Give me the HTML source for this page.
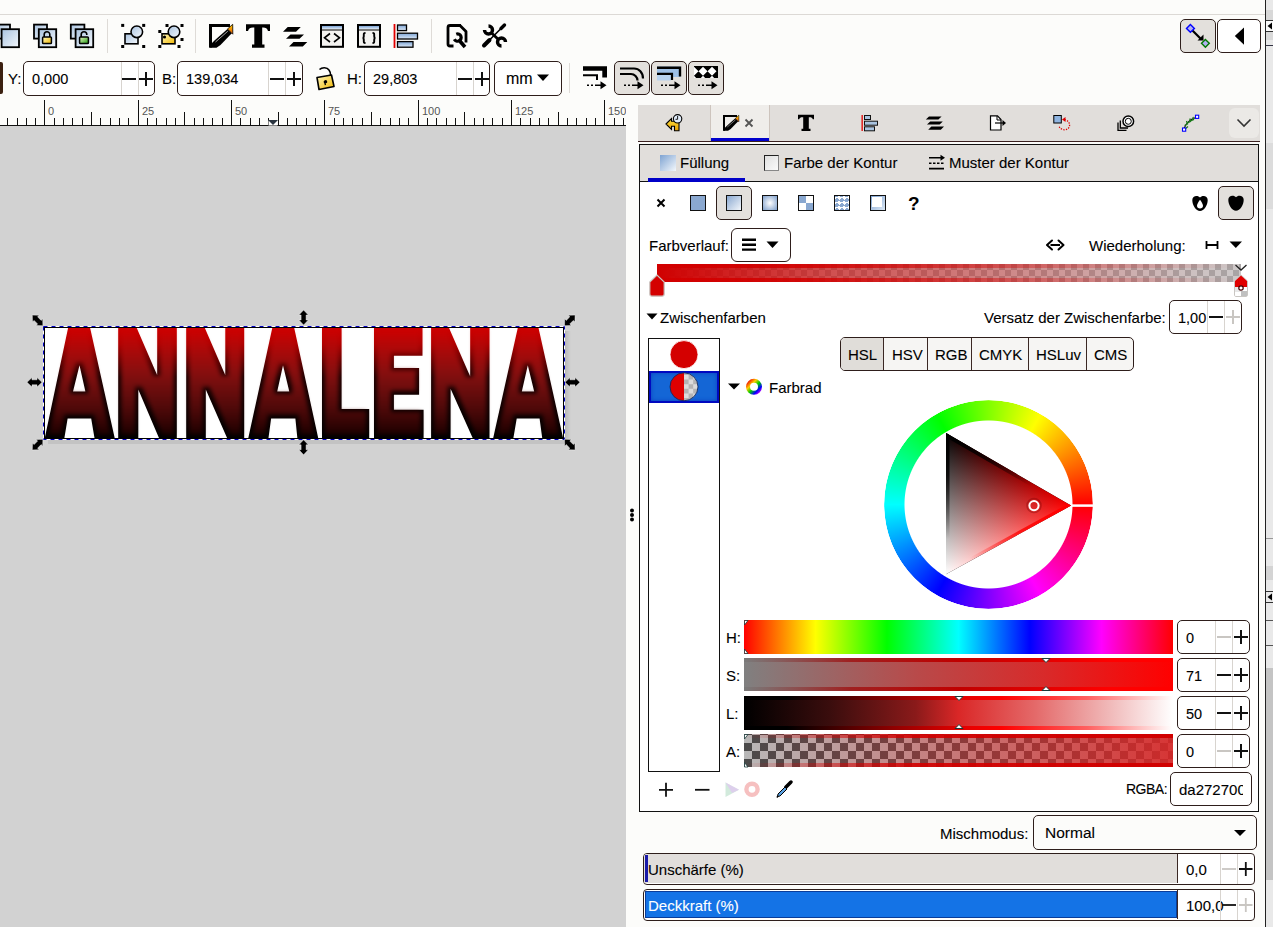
<!DOCTYPE html>
<html><head><meta charset="utf-8">
<style>
*{box-sizing:border-box;margin:0;padding:0}
html,body{width:1273px;height:927px;overflow:hidden;background:#fcfcfa;font-family:"Liberation Sans",sans-serif;color:#000;position:relative;-webkit-text-stroke:0.1px currentColor}
.a{position:absolute}
.sep{position:absolute;width:1px;background:#dedbd7}
.spin{position:absolute;height:35px;border:1px solid #2e1e1b;border-radius:5px;background:#fff}
.spin .v{position:absolute;left:8px;top:8.5px;font-size:14.5px}
.spin .d{position:absolute;top:0;bottom:0;width:1px;background:#d8d4cf}
.lbl{position:absolute;font-size:15px}
.btn{position:absolute;border:1px solid #2e1e1b;border-radius:5px;background:#e3e0dc}
.t15{font-size:15px}
.mi,.pl{position:absolute;width:14px;height:14px;top:50%;margin-top:-7px}
.mi:before,.pl:before,.pl:after{content:"";position:absolute;background:#111}
.mi:before,.pl:before{left:0;right:0;top:6px;height:2px}
.pl:after{top:0;bottom:0;left:6px;width:2px}
.gy:before,.gy:after{background:#c9c6c2}

</style></head><body>
<!-- top strip -->
<div class="a" style="left:0;top:14px;width:1265px;height:1px;background:#dcd9d5"></div>


<!-- toolbar icons -->
<svg class="a" style="left:0;top:0" width="1273" height="145" viewBox="0 0 1273 145">
 <defs>
  <linearGradient id="bl" x1="0" y1="0" x2="1" y2="1"><stop offset="0" stop-color="#a9c3e0"/><stop offset="1" stop-color="#f4f8fc"/></linearGradient>
  <linearGradient id="bl2" x1="0" y1="0" x2="0" y2="1"><stop offset="0" stop-color="#7fa6d6"/><stop offset="1" stop-color="#dce8f5"/></linearGradient>
  <linearGradient id="yl" x1="0" y1="0" x2="1" y2="1"><stop offset="0" stop-color="#fff9c0"/><stop offset="1" stop-color="#f2b800"/></linearGradient>
  <linearGradient id="gr" x1="0" y1="0" x2="1" y2="1"><stop offset="0" stop-color="#e8f8c0"/><stop offset="1" stop-color="#1e9a10"/></linearGradient>
  <linearGradient id="o3" x1="0" y1="0" x2="0" y2="1"><stop offset="0" stop-color="#ffd000"/><stop offset="1" stop-color="#e05000"/></linearGradient>
  <linearGradient id="org" x1="0" y1="0" x2="0" y2="1"><stop offset="0" stop-color="#ffd000"/><stop offset="1" stop-color="#e05000"/></linearGradient>
 </defs>
 <g stroke="#000" stroke-width="1.8" fill="url(#bl)">
  <!-- icon1 -->
  <rect x="-6" y="24.6" width="16" height="14"/>
  <rect x="1.6" y="29.2" width="17.4" height="18"/>
  <!-- icon2 -->
  <rect x="34" y="24.6" width="13" height="14"/>
  <rect x="38.8" y="29.2" width="17.4" height="18"/>
  <!-- icon3 -->
  <rect x="70.8" y="24.6" width="13.6" height="14"/>
  <rect x="75.6" y="29.2" width="17.6" height="18"/>
 </g>
 <path d="M44.2 37V34.5a2.8 2.8 0 0 1 5.6 0V37" fill="none" stroke="#000" stroke-width="1.6"/>
 <rect x="42.6" y="37" width="8.8" height="6.6" rx="0.8" fill="url(#yl)" stroke="#000" stroke-width="1.5"/>
 <path d="M81.2 37V34.5a2.8 2.8 0 0 1 5.6 0V35" fill="none" stroke="#000" stroke-width="1.6"/>
 <rect x="79.6" y="37" width="8.8" height="6.6" rx="0.8" fill="url(#gr)" stroke="#000" stroke-width="1.5"/>
 <!-- icon4 zoom sel -->
 <g fill="#000"><rect x="121.2" y="23.9" width="3" height="3"/><rect x="142.2" y="23.9" width="3" height="3"/><rect x="121.2" y="45" width="3" height="3"/><rect x="142.2" y="45" width="3" height="3"/></g>
 <rect x="125" y="33.8" width="13" height="10" fill="url(#bl)" stroke="#000" stroke-width="1.6"/>
 <circle cx="136.8" cy="31.8" r="5.8" fill="url(#bl)" stroke="#000" stroke-width="1.6"/>
 <!-- icon5 -->
 <g fill="#000"><rect x="158.3" y="30" width="3" height="3"/><rect x="165.5" y="24" width="3" height="3"/><rect x="180.5" y="24" width="3" height="3"/><rect x="180.5" y="38" width="3" height="3"/><rect x="158.3" y="45" width="3" height="3"/><rect x="177.5" y="45" width="3" height="3"/></g>
 <rect x="162" y="33.8" width="13" height="10" fill="url(#yl)" stroke="#000" stroke-width="1.6"/>
 <circle cx="164.5" cy="37" r="1.6" fill="#000"/>
 <circle cx="174" cy="31.8" r="5.8" fill="url(#bl)" stroke="#000" stroke-width="1.6"/>
 <!-- icon6 fill&stroke -->
 <g transform="translate(209 24)"><path d="M1.5 23.5V1.5H21" fill="none" stroke="#000" stroke-width="3"/>
 <path d="M0.3 23.7L2.5 19.5L5.5 16.5L18.5 5L22.8 9.2L11.5 21L7.5 23.7Z" fill="#000"/>
 <path d="M6.5 18L18.8 7.2" stroke="#bbb" stroke-width="0.9"/>
 <path d="M18.5 5L23.7 0.3L23.8 10.2L22.8 9.2Z" fill="url(#o3)" stroke="#000" stroke-width="0.8"/></g>
 <!-- icon7 T -->
 <path d="M246 24.2H270V31H268C267 28.5 266 27.6 263 27.6H262.2V44.6H264.5V47.7H252V44.6H254.3V27.6H253C250 27.6 249 28.5 248 31H246Z" fill="#000"/>
 <!-- icon8 layers -->
 <path d="M283 31.7L287.7 27H300.8L296 31.7Z M286 38.8L290.5 34.4H304L299.5 38.8Z M289 46.5L293.5 42H307.3L302.8 46.5Z" fill="#000"/>
 <!-- icon9 xml -->
 <rect x="321" y="25" width="22" height="21.8" fill="#f4f3f0" stroke="#000" stroke-width="2"/>
 <rect x="322" y="26" width="20" height="3" fill="url(#bl2)"/>
 <path d="M322 30H342" stroke="#000" stroke-width="1"/>
 <path d="M330 33.5L324.5 37.8L330 42M334 33.5L339.5 37.8L334 42" fill="none" stroke="#000" stroke-width="1.6"/>
 <!-- icon10 css -->
 <rect x="358" y="25" width="22" height="21.8" fill="#f4f3f0" stroke="#000" stroke-width="2"/>
 <rect x="359" y="26" width="20" height="3" fill="url(#bl2)"/>
 <path d="M359 30H379" stroke="#000" stroke-width="1"/>
 <path d="M365.5 33C363.5 33 363.8 34 363.8 36C363.8 37.5 363.5 38 362.5 38C363.5 38 363.8 38.5 363.8 40C363.8 42 363.5 43 365.5 43M372.5 33C374.5 33 374.2 34 374.2 36C374.2 37.5 374.5 38 375.5 38C374.5 38 374.2 38.5 374.2 40C374.2 42 374.5 43 372.5 43" fill="none" stroke="#000" stroke-width="1.9"/>
 <!-- icon11 align -->
 <rect x="393.6" y="24" width="1.8" height="24" fill="#e00000"/>
 <rect x="397.5" y="25" width="9" height="5.6" fill="url(#bl2)" stroke="#000" stroke-width="1.3"/>
 <rect x="397.5" y="33.2" width="20" height="5.8" fill="url(#bl2)" stroke="#000" stroke-width="1.3"/>
 <rect x="397.5" y="41.6" width="15.5" height="5.6" fill="url(#bl2)" stroke="#000" stroke-width="1.3"/>
 <!-- icon12 doc props -->
 <path d="M461 25.5H450C448.5 25.5 448 26 448 27.5V44C448 45.5 448.5 46 450 46H453.5M466 42.5V31.5L460 25.5" fill="none" stroke="#000" stroke-width="2.8" stroke-linejoin="round"/>
 <path d="M457.5 34A3.6 3.6 0 1 1 454 38" fill="none" stroke="#000" stroke-width="3.2" transform="rotate(-20 457.5 37.6)"/>
 <path d="M458.5 39.5L465 47" stroke="#000" stroke-width="3.6"/>
 <!-- icon13 tools -->
 <path d="M488.5 26A4 4 0 1 1 484.5 30" fill="none" stroke="#000" stroke-width="3.4"/>
 <path d="M501.5 46A4 4 0 1 1 505.5 42" fill="none" stroke="#000" stroke-width="3.4"/>
 <path d="M491 32.5L499 40" stroke="#000" stroke-width="2.8"/>
 <path d="M484 45.5L489.5 40" stroke="#000" stroke-width="4" stroke-linecap="round"/>
 <path d="M489 40.5L501.5 28" stroke="#000" stroke-width="1.6"/>
 <path d="M501 28.5L504.5 25" stroke="#000" stroke-width="3.4" stroke-linecap="round"/>
 <!-- lock toolbar2 -->
 <path d="M319.5 69.5C322 67 327 67 329 70C330.5 72 330.5 74 330.5 75" fill="none" stroke="#000" stroke-width="1.6"/>
 <path d="M317 77.5L331.5 75L334 86.5L319 89.5Z" fill="url(#yl)" stroke="#000" stroke-width="1.6" stroke-linejoin="round"/>
 <path d="M324.5 80.5a1.6 1.6 0 1 1 1.2 2.8L326 85L324.8 85.2L324.3 83.2a1.6 1.6 0 0 1 .2 -2.7Z" fill="#000"/>
</svg>

<!-- toolbar separators -->
<div class="sep" style="left:107px;top:19px;height:34px"></div>
<div class="sep" style="left:195px;top:19px;height:34px"></div>
<div class="sep" style="left:431px;top:19px;height:34px"></div>
<div class="sep" style="left:569px;top:63px;height:30px"></div>

<!-- toolbar 2 -->
<div class="a" style="left:0;top:62px;width:3px;height:32px;background:#3b2010;border-radius:0 2px 2px 0"></div>
<div class="lbl" style="left:8px;top:70px">Y:</div>
<div class="spin" style="left:23px;top:61px;width:132px"><div class="v">0,000</div><div class="d" style="left:97px"></div><div class="d" style="left:114px"></div><div class="mi" style="left:98px"></div><div class="pl" style="left:114.5px"></div></div>
<div class="lbl" style="left:162px;top:70px">B:</div>
<div class="spin" style="left:177px;top:61px;width:126px"><div class="v">139,034</div><div class="d" style="left:90px"></div><div class="d" style="left:107px"></div><div class="mi" style="left:91.5px"></div><div class="pl" style="left:108.5px"></div></div>
<div class="lbl" style="left:347px;top:70px">H:</div>
<div class="spin" style="left:364px;top:61px;width:126px"><div class="v">29,803</div><div class="d" style="left:91px"></div><div class="d" style="left:108px"></div><div class="mi" style="left:92.5px"></div><div class="pl" style="left:109.5px"></div></div>
<div class="spin" style="left:494px;top:61px;width:68px"><div class="v" style="left:11px;top:7.5px;font-size:16px">mm</div></div>

<div class="btn" style="left:614px;top:61px;width:36px;height:34px"></div>
<div class="btn" style="left:651px;top:61px;width:36px;height:34px"></div>
<div class="btn" style="left:688px;top:61px;width:36px;height:34px"></div>

<!-- top-right buttons -->
<div class="btn" style="left:1180px;top:19px;width:36px;height:34px"></div>
<div class="btn" style="left:1217px;top:19px;width:44px;height:34px;background:#fff"></div>

<!-- ruler -->
<svg class="a" style="left:0;top:0" width="626" height="127"><path d="M7.5 118V125M17.5 118V125M26.5 118V125M35.5 118V125M44.5 100V125M54.5 118V125M63.5 118V125M72.5 118V125M82.5 118V125M91.5 112V125M100.5 118V125M110.5 118V125M119.5 118V125M128.5 118V125M138.5 100V125M147.5 118V125M156.5 118V125M166.5 118V125M175.5 118V125M184.5 112V125M194.5 118V125M203.5 118V125M212.5 118V125M222.5 118V125M231.5 100V125M240.5 118V125M250.5 118V125M259.5 118V125M268.5 118V125M278.5 112V125M287.5 118V125M296.5 118V125M306.5 118V125M315.5 118V125M324.5 100V125M334.5 118V125M343.5 118V125M352.5 118V125M362.5 118V125M371.5 112V125M380.5 118V125M390.5 118V125M399.5 118V125M408.5 118V125M418.5 100V125M427.5 118V125M436.5 118V125M446.5 118V125M455.5 118V125M464.5 112V125M474.5 118V125M483.5 118V125M492.5 118V125M502.5 118V125M511.5 100V125M520.5 118V125M530.5 118V125M539.5 118V125M548.5 118V125M558.5 112V125M567.5 118V125M576.5 118V125M586.5 118V125M595.5 118V125M604.5 100V125M614.5 118V125M623.5 118V125" stroke="#111" stroke-width="1"/><rect x="0" y="125" width="626" height="1" fill="#111"/><g font-family="Liberation Sans" font-size="11" fill="#555"><text x="48" y="114.5">0</text><text x="142" y="114.5">25</text><text x="235" y="114.5">50</text><text x="328" y="114.5">75</text><text x="422" y="114.5">100</text><text x="515" y="114.5">125</text><text x="608" y="114.5">150</text></g></svg>
<svg class="a" style="left:268px;top:120px" width="11" height="6"><path d="M0.5 0.5H9.5V5.5H0.5Z" fill="#fff"/><path d="M0 0H10L5 5Z" fill="#2a3440"/></svg>

<!-- canvas -->
<div class="a" style="left:0;top:126px;width:626px;height:801px;background:#d2d2d2"></div>


<!-- artwork -->
<svg class="a" style="left:0;top:290px" width="626" height="180" viewBox="0 290 626 180">
 <defs>
  <linearGradient id="lg" x1="0" y1="327" x2="0" y2="438.5" gradientUnits="userSpaceOnUse">
   <stop offset="0" stop-color="#d80000"/><stop offset="0.15" stop-color="#bc0808"/><stop offset="0.35" stop-color="#980e0e"/><stop offset="0.55" stop-color="#740e0e"/><stop offset="0.75" stop-color="#520a0a"/><stop offset="0.9" stop-color="#340404"/><stop offset="1" stop-color="#1c0000"/>
  </linearGradient>
  <linearGradient id="lge" x1="0" y1="327" x2="0" y2="438.5" gradientUnits="userSpaceOnUse">
   <stop offset="0" stop-color="#d00000"/><stop offset="0.15" stop-color="#b00000"/><stop offset="0.3" stop-color="#600000"/><stop offset="0.45" stop-color="#150000"/><stop offset="1" stop-color="#000"/>
  </linearGradient>
  <linearGradient id="sh" x1="0" y1="0" x2="1" y2="0"><stop offset="0" stop-color="#000" stop-opacity="0.15"/><stop offset="1" stop-color="#000" stop-opacity="0"/></linearGradient>
  <filter id="core" x="-5%" y="-5%" width="110%" height="110%" color-interpolation-filters="sRGB">
   <feMorphology in="SourceGraphic" operator="erode" radius="3.2" result="er"/>
   <feGaussianBlur in="er" stdDeviation="2.2" result="bl"/>
   <feOffset in="bl" dy="-1.2"/>
  </filter>
 </defs>
 <rect x="564" y="331" width="7" height="112" fill="url(#sh)"/>
 <rect x="48" y="439" width="516" height="5" fill="#000" opacity="0.07"/>
 <rect x="44" y="327" width="520" height="112" fill="#fff"/>
 <clipPath id="bx"><rect x="44" y="327" width="520" height="112"/></clipPath>
 <g clip-path="url(#bx)">
 <path d="M44.7 438.5L68.3 327H89.9L114.8 438.5H94.6L91.2 418.4H67.6L64.3 438.5ZM79.5 365.3L85.4 391.5H73ZM118.2 327H136.3L157.2 375.3V327H176.8V438.5H159.2L138.3 389.5V438.5H118.2ZM186.2 327H204.4L225.3 375.3V327H244.2V438.5H227.3L205.8 389.5V438.5H186.2ZM248.2 438.5L272.5 327H294L318.3 438.5H297.4L295.4 418.4H271.1L268.4 438.5ZM283 365.3L289.3 391.5H277.2ZM322 327H341.6V409H369.2V438.5H322ZM374 327H422.5V355.7H393.9V367.9H419.1V394.8H393.9V409.7H423.6V438.5H374ZM431.1 327H448.6L470.2 376.6V327H489.5V438.5H472.9L450.6 388.8V438.5H431.1ZM493.1 438.5L518 327H538.3L563.2 438.5H542.3L539.6 418.4H516.7L513.3 438.5ZM527.8 365.3L534.2 391.5H521.8Z" fill="url(#lge)" fill-rule="evenodd"/>
 <path d="M44.7 438.5L68.3 327H89.9L114.8 438.5H94.6L91.2 418.4H67.6L64.3 438.5ZM79.5 365.3L85.4 391.5H73ZM118.2 327H136.3L157.2 375.3V327H176.8V438.5H159.2L138.3 389.5V438.5H118.2ZM186.2 327H204.4L225.3 375.3V327H244.2V438.5H227.3L205.8 389.5V438.5H186.2ZM248.2 438.5L272.5 327H294L318.3 438.5H297.4L295.4 418.4H271.1L268.4 438.5ZM283 365.3L289.3 391.5H277.2ZM322 327H341.6V409H369.2V438.5H322ZM374 327H422.5V355.7H393.9V367.9H419.1V394.8H393.9V409.7H423.6V438.5H374ZM431.1 327H448.6L470.2 376.6V327H489.5V438.5H472.9L450.6 388.8V438.5H431.1ZM493.1 438.5L518 327H538.3L563.2 438.5H542.3L539.6 418.4H516.7L513.3 438.5ZM527.8 365.3L534.2 391.5H521.8Z" fill="url(#lg)" fill-rule="evenodd" filter="url(#core)"/>
 </g>
 <rect x="44.5" y="327.5" width="519" height="111" fill="none" stroke="#000" stroke-width="1"/>
 <rect x="43.5" y="326.5" width="521" height="113" fill="none" stroke="#fff" stroke-width="1"/>
 <rect x="43.5" y="326.5" width="521" height="113" fill="none" stroke="#0000c0" stroke-width="1" stroke-dasharray="4 4"/>
 <g fill="#000" stroke="#fff" stroke-width="0.6" stroke-opacity="0.7"><path transform="translate(34.5 382.3) rotate(0)" d="M-7.5 0L-2.5 -4.7V-2.5H2.5V-4.7L7.5 0L2.5 4.7V2.5H-2.5V4.7Z"/><path transform="translate(572.5 382.3) rotate(0)" d="M-7.5 0L-2.5 -4.7V-2.5H2.5V-4.7L7.5 0L2.5 4.7V2.5H-2.5V4.7Z"/><path transform="translate(303.6 317.5) rotate(90)" d="M-7.5 0L-2.5 -4.7V-2.5H2.5V-4.7L7.5 0L2.5 4.7V2.5H-2.5V4.7Z"/><path transform="translate(303.6 447.3) rotate(90)" d="M-7.5 0L-2.5 -4.7V-2.5H2.5V-4.7L7.5 0L2.5 4.7V2.5H-2.5V4.7Z"/><path transform="translate(37.6 320.4) rotate(45)" d="M-7.5 0L-2.5 -4.7V-2.5H2.5V-4.7L7.5 0L2.5 4.7V2.5H-2.5V4.7Z"/><path transform="translate(569.8 320.4) rotate(-45)" d="M-7.5 0L-2.5 -4.7V-2.5H2.5V-4.7L7.5 0L2.5 4.7V2.5H-2.5V4.7Z"/><path transform="translate(37.6 444.6) rotate(-45)" d="M-7.5 0L-2.5 -4.7V-2.5H2.5V-4.7L7.5 0L2.5 4.7V2.5H-2.5V4.7Z"/><path transform="translate(569.8 444.6) rotate(45)" d="M-7.5 0L-2.5 -4.7V-2.5H2.5V-4.7L7.5 0L2.5 4.7V2.5H-2.5V4.7Z"/></g>
</svg>

<svg class="a" style="left:626px;top:505px" width="12" height="20"><circle cx="6" cy="5.5" r="2" fill="#000"/><circle cx="6" cy="10" r="2" fill="#000"/><circle cx="6" cy="14.5" r="2" fill="#000"/></svg>
<!-- right strip -->
<div class="a" style="left:1265px;top:0;width:1px;height:927px;background:#222"></div>
<div class="a" style="left:1266px;top:0;width:7px;height:927px;background:#e9e9e9"></div>
<div class="a" style="left:1266px;top:10px;width:7px;height:10px;background:#d8d8d8"></div>
<div class="a" style="left:1266px;top:20px;width:7px;height:1px;background:#333"></div>
<div class="a" style="left:1266px;top:21px;width:7px;height:10px;background:#fafafa"></div>
<svg class="a" style="left:1266px;top:21px" width="7" height="10"><path d="M1.5 5L6 1.5V8.5Z" fill="#000"/></svg>
<div class="a" style="left:1266px;top:31px;width:7px;height:1px;background:#333"></div>
<div class="a" style="left:1266px;top:32px;width:7px;height:8px;background:#dadada"></div>
<div class="a" style="left:1266px;top:45px;width:7px;height:1px;background:#334"></div>
<div class="a" style="left:1266px;top:143px;width:7px;height:66px;background:#dcdcdc"></div>
<div class="a" style="left:1266px;top:538px;width:7px;height:1px;background:#999"></div>
<div class="a" style="left:1266px;top:566px;width:7px;height:14px;background:#d4d4d4"></div>
<div class="a" style="left:1266px;top:591px;width:7px;height:1px;background:#333"></div>
<svg class="a" style="left:1266px;top:592px" width="7" height="10"><path d="M1.5 5L6 1.5V8.5Z" fill="#000"/></svg>
<div class="a" style="left:1266px;top:602px;width:7px;height:1px;background:#333"></div>
<div class="a" style="left:1266px;top:620px;width:7px;height:1px;background:#555"></div>
<div class="a" style="left:1266px;top:645px;width:7px;height:1px;background:#555"></div>
<div class="a" style="left:1266px;top:668px;width:7px;height:212px;background:#c4c4c4"></div>

<!-- dock tabbar -->
<div class="a" style="left:638px;top:105px;width:622px;height:36px;background:#e1dedb"></div>
<div class="a" style="left:638px;top:141px;width:622px;height:1px;background:#3b2020"></div>
<div class="a" style="left:710px;top:105px;width:60px;height:36px;background:#efedea;border-left:1px solid #cdc4bd;border-right:1px solid #cdc4bd"></div>
<div class="a" style="left:711px;top:138px;width:58px;height:3px;background:#0000cc"></div>
<div class="a" style="left:1229px;top:108px;width:30px;height:30px;border-radius:6px;background:#ebe9e6"></div>

<!-- notebook -->
<div class="a" style="left:639px;top:144px;width:620px;height:668px;border:1px solid #111;background:#fff"></div>
<div class="a" style="left:640px;top:145px;width:618px;height:37px;background:#e1dedb;border-bottom:1px solid #111"></div>


<!-- notebook header tabs -->
<div class="a" style="left:660px;top:155px;width:16px;height:16px;background:linear-gradient(135deg,#7ea3d2,#f4f8fc)"></div>
<div class="a t15" style="left:680px;top:154px">Füllung</div>
<div class="a" style="left:648px;top:178px;width:97px;height:4px;background:#0000c8"></div>
<div class="a" style="left:764px;top:155px;width:15px;height:16px;border:1.5px solid #222;border-right-color:#888;border-bottom-color:#888;background:linear-gradient(135deg,#e0e0e0,#fafafa)"></div>
<div class="a t15" style="left:784px;top:154px">Farbe der Kontur</div>
<div class="a t15" style="left:949px;top:154px">Muster der Kontur</div>

<!-- fill type row -->
<div class="btn" style="left:716px;top:186px;width:36px;height:34px"></div>
<div class="btn" style="left:1218px;top:186px;width:36px;height:34px"></div>
<div class="a" style="left:690px;top:195px;width:16px;height:16px;border:1px solid #111;background:#8aa8d0"></div>
<div class="a" style="left:726px;top:195px;width:16px;height:16px;border:1px solid #111;background:linear-gradient(135deg,#8aa8d0,#f2f6fb)"></div>
<div class="a" style="left:762px;top:195px;width:16px;height:16px;border:1px solid #111;background:radial-gradient(circle,#fff 0,#8aa8d0 90%)"></div>
<div class="a" style="left:798px;top:195px;width:16px;height:16px;border:1px solid #111;background:conic-gradient(#fff 0 25%,#8aa8d0 0 50%,#fff 0 75%,#8aa8d0 0)"></div>
<div class="a" style="left:834px;top:195px;width:16px;height:16px;border:1px solid #111;background:conic-gradient(from 45deg,#fff 0 25%,#8aa8d0 0 50%,#fff 0 75%,#8aa8d0 0) -1px -1px/5px 5px"></div>
<div class="a" style="left:870px;top:195px;width:16px;height:16px;border:1px solid #111;background:linear-gradient(#fff,#fff) 1px 1px/10px 10px no-repeat,linear-gradient(135deg,#7ea3d2,#dce8f5)"></div>

<!-- Farbverlauf row -->
<div class="a t15" style="left:649px;top:237px">Farbverlauf:</div>
<div class="spin" style="left:731px;top:228px;width:60px;height:34px;border-radius:6px"></div>
<div class="a t15" style="left:1089px;top:237px">Wiederholung:</div>

<!-- gradient bar -->
<div class="a" style="left:657px;top:264px;width:584px;height:18px;background:linear-gradient(90deg,rgba(210,0,0,1),rgba(210,0,0,0.85) 25%,rgba(210,0,0,0.2) 75%,rgba(210,0,0,0)) 0 0/100% 4px no-repeat,linear-gradient(90deg,rgba(210,0,0,1),rgba(210,0,0,0.85) 25%,rgba(210,0,0,0.2) 75%,rgba(210,0,0,0)) 0 14px/100% 4px no-repeat,linear-gradient(90deg,#d00000,rgba(210,0,0,0.6) 30%,rgba(210,0,0,0.05) 90%,rgba(210,0,0,0)),repeating-conic-gradient(#a9a5a5 0 25%,#cdc9c9 0 50%) 0 0/12px 12px"></div>

<!-- Zwischenfarben -->
<div class="a t15" style="left:660px;top:309px">Zwischenfarben</div>
<div class="a t15" style="left:984px;top:309px">Versatz der Zwischenfarbe:</div>
<div class="spin" style="left:1169px;top:300px;width:73px;height:34px"><div class="v t15" style="left:8px;top:9px">1,00</div><div class="d" style="left:37px"></div><div class="d" style="left:54px"></div><div class="mi" style="left:38.5px"></div><div class="pl gy" style="left:55.5px"></div></div>

<!-- stops list -->
<div class="a" style="left:648px;top:338px;width:72px;height:434px;border:1px solid #111;background:#fff"></div>
<div class="a" style="left:649px;top:371px;width:70px;height:32px;background:#1466d6;border:2px solid #0008c0;box-shadow:inset 0 0 4px #0a40c0"></div>

<!-- HSL group -->
<div class="a" style="left:840px;top:337px;width:294px;height:34px;border:1px solid #2e1e1b;border-radius:5px;background:#f6f5f3;overflow:hidden">
  <div class="a" style="left:0;top:0;width:43px;height:32px;background:#e0ddd9;border-right:1px solid #3b2824"></div>
  <div class="a" style="left:86px;top:0;width:1px;height:32px;background:#3b2824"></div>
  <div class="a" style="left:130px;top:0;width:1px;height:32px;background:#3b2824"></div>
  <div class="a" style="left:187px;top:0;width:1px;height:32px;background:#3b2824"></div>
  <div class="a" style="left:245px;top:0;width:1px;height:32px;background:#3b2824"></div>
  <div class="a t15" style="left:7px;top:8px">HSL</div>
  <div class="a t15" style="left:51px;top:8px">HSV</div>
  <div class="a t15" style="left:94px;top:8px">RGB</div>
  <div class="a t15" style="left:138px;top:8px">CMYK</div>
  <div class="a t15" style="left:195px;top:8px">HSLuv</div>
  <div class="a t15" style="left:253px;top:8px">CMS</div>
</div>
<div class="a t15" style="left:769px;top:379px">Farbrad</div>


<!-- color wheel -->
<div class="a" style="left:883.7px;top:400.2px;width:209px;height:209px;border-radius:50%;background:conic-gradient(from 0deg,hsl(90,100%,50%) 0deg,hsl(60,100%,50%) 30deg,hsl(30,100%,50%) 60deg,hsl(0,100%,50%) 90deg,hsl(330,100%,50%) 120deg,hsl(300,100%,50%) 150deg,hsl(270,100%,50%) 180deg,hsl(240,100%,50%) 210deg,hsl(210,100%,50%) 240deg,hsl(180,100%,50%) 270deg,hsl(150,100%,50%) 300deg,hsl(120,100%,50%) 330deg,hsl(90,100%,50%) 360deg);-webkit-mask:radial-gradient(circle,transparent 83.5px,#000 84.5px,#000 103.8px,transparent 104.8px);mask:radial-gradient(circle,transparent 83.5px,#000 84.5px,#000 103.8px,transparent 104.8px)"></div>
<svg class="a" style="left:860px;top:380px;isolation:isolate" width="260" height="240">
 <defs>
  <linearGradient id="gR" gradientUnits="userSpaceOnUse" x1="86" y1="53.1" x2="145.51" y2="161.54"><stop offset="0" stop-color="#000"/><stop offset="1" stop-color="#f00"/></linearGradient>
  <linearGradient id="gG" gradientUnits="userSpaceOnUse" x1="147.24" y1="88.62" x2="86" y2="194.2"><stop offset="0" stop-color="#000"/><stop offset="1" stop-color="#0ff"/></linearGradient>
 </defs>
 <path d="M86 53.1L86 194.2L211 125.6Z" fill="url(#gR)"/>
 <path d="M86 53.1L86 194.2L211 125.6Z" fill="url(#gG)" style="mix-blend-mode:screen"/>
  <clipPath id="tc"><path d="M86 53.1L86 194.2L211 125.6Z"/></clipPath>
 <linearGradient id="rkr" gradientUnits="userSpaceOnUse" x1="86" y1="53.1" x2="211" y2="125.6"><stop offset="0" stop-color="#000"/><stop offset="0.35" stop-color="#000" stop-opacity="0.7"/><stop offset="0.7" stop-color="#000" stop-opacity="0"/></linearGradient>
 <linearGradient id="rkw" gradientUnits="userSpaceOnUse" x1="86" y1="53.1" x2="86" y2="194.2"><stop offset="0" stop-color="#000"/><stop offset="0.3" stop-color="#000" stop-opacity="0.8"/><stop offset="0.75" stop-color="#000" stop-opacity="0"/></linearGradient>
 <linearGradient id="rwr" gradientUnits="userSpaceOnUse" x1="211" y1="125.6" x2="86" y2="194.2"><stop offset="0" stop-color="#f00"/><stop offset="0.4" stop-color="#f00" stop-opacity="0.8"/><stop offset="0.8" stop-color="#f00" stop-opacity="0"/></linearGradient>
 <g clip-path="url(#tc)"><path d="M211 125.6L86 194.2" stroke="url(#rwr)" stroke-width="6"/><path d="M86 53.1L211 125.6" stroke="url(#rkr)" stroke-width="7"/><path d="M86 53.1V194.2" stroke="url(#rkw)" stroke-width="7"/></g>
 <path d="M211 125.6H233" stroke="#fff" stroke-width="2.5"/>
 <circle cx="174" cy="125.6" r="4.6" fill="none" stroke="#fff" stroke-width="2"/>
 <circle cx="174" cy="125.6" r="7" fill="none" stroke="rgba(120,0,0,0.35)" stroke-width="1.5"/>
</svg>

<!-- sliders -->
<div class="a t15" style="left:726px;top:629px">H:</div>
<div class="a t15" style="left:726px;top:667px">S:</div>
<div class="a t15" style="left:726px;top:705px">L:</div>
<div class="a t15" style="left:726px;top:743px">A:</div>
<div class="a" style="left:744px;top:620px;width:429px;height:34px;background:linear-gradient(90deg,#f00,#ff0 16.67%,#0f0 33.33%,#0ff 50%,#00f 66.67%,#f0f 83.33%,#f00)"></div>
<div class="a" style="left:744px;top:658px;width:429px;height:33px;background:linear-gradient(90deg,#7a7a7a,#a02020 25%,#c00000 50%,#f00 85%,#f00) 0 0/100% 4px no-repeat,linear-gradient(90deg,#7a7a7a,#a02020 25%,#c00000 50%,#f00 85%,#f00) 0 29px/100% 4px no-repeat,linear-gradient(90deg,#808080,#b84a4a 40%,#d82a2a 70%,#f00)"></div>
<div class="a" style="left:744px;top:696px;width:429px;height:34px;background:linear-gradient(90deg,#000,#000 10%,#900000 35%,#e00000 50%,#f00 60%,#ff6060 80%,#fff) 0 0/100% 4px no-repeat,linear-gradient(90deg,#000,#000 10%,#900000 35%,#e00000 50%,#f00 60%,#ff6060 80%,#fff) 0 30px/100% 4px no-repeat,linear-gradient(90deg,#000,#3a0d0d 20%,#8a1a1a 40%,#da2727 50%,#e46a6a 68%,#f0b8b8 85%,#fff)"></div>
<div class="a" style="left:744px;top:734px;width:429px;height:33px;background:linear-gradient(90deg,rgba(210,0,0,0),rgba(210,0,0,0.9) 40%,#d00000) 0 0/100% 4px no-repeat,linear-gradient(90deg,rgba(210,0,0,0),rgba(210,0,0,0.9) 40%,#d00000) 0 29px/100% 4px no-repeat,linear-gradient(90deg,rgba(218,39,39,0),rgba(218,39,39,0.9)),repeating-conic-gradient(#4a4a4a 0 25%,#b8b8b8 0 50%) 0 1px/16px 16px"></div>

<div class="spin" style="left:1177px;top:620px;width:73px;height:34px"><div class="v t15" style="left:8px;top:9px">0</div><div class="d" style="left:37px"></div><div class="d" style="left:54px"></div><div class="mi gy" style="left:38.5px"></div><div class="pl" style="left:55.5px"></div></div>
<div class="spin" style="left:1177px;top:658px;width:73px;height:34px"><div class="v t15" style="left:8px;top:9px">71</div><div class="d" style="left:37px"></div><div class="d" style="left:54px"></div><div class="mi" style="left:38.5px"></div><div class="pl" style="left:55.5px"></div></div>
<div class="spin" style="left:1177px;top:696px;width:73px;height:34px"><div class="v t15" style="left:8px;top:9px">50</div><div class="d" style="left:37px"></div><div class="d" style="left:54px"></div><div class="mi" style="left:38.5px"></div><div class="pl" style="left:55.5px"></div></div>
<div class="spin" style="left:1177px;top:734px;width:73px;height:34px"><div class="v t15" style="left:8px;top:9px">0</div><div class="d" style="left:37px"></div><div class="d" style="left:54px"></div><div class="mi gy" style="left:38.5px"></div><div class="pl" style="left:55.5px"></div></div>

<div class="a" style="left:1126px;top:781px;font-size:14px;letter-spacing:-0.5px">RGBA:</div>
<div class="spin" style="left:1170px;top:772px;width:82px;height:34px;overflow:hidden"><div class="a" style="left:8px;top:0;width:64px;height:32px;overflow:hidden"><div class="a" style="left:0;top:8px;font-size:15px;white-space:nowrap">da272700</div></div></div>

<!-- bottom -->
<div class="a t15" style="left:940px;top:825px">Mischmodus:</div>
<div class="spin" style="left:1033px;top:815px;width:224px;height:35px;background:#fcfcfa"><div class="v" style="left:11px;top:8px;font-size:15.5px">Normal</div></div>
<div class="a" style="left:643px;top:853px;width:612px;height:32px;border:1px solid #2e1e1b;border-radius:4px;background:#fff;overflow:hidden">
  <div class="a" style="left:0;top:0;width:534px;height:29px;background:#e1dedb;border-right:1px solid #3b2824"></div>
  <div class="a" style="left:1px;top:1px;width:3px;height:27px;background:#1a1aa8"></div>
  <div class="a t15" style="left:4px;top:7px">Unschärfe (%)</div>
  <div class="a t15" style="left:542px;top:7px">0,0</div>
  <div class="a" style="left:576px;top:0;width:1px;height:30px;background:#d8d4cf"></div>
  <div class="a" style="left:593px;top:0;width:1px;height:30px;background:#d8d4cf"></div>
</div>
<div class="a" style="left:643px;top:889px;width:612px;height:32px;border:1px solid #2e1e1b;border-radius:4px;background:#fff;overflow:hidden">
  <div class="a" style="left:1px;top:1px;width:532px;height:27px;background:#1473e6;border:1px solid #0a3d9a"></div>
  <div class="a" style="left:533px;top:0;width:1px;height:29px;background:#3b2824"></div>
  <div class="a t15" style="left:4px;top:7px;color:#fff">Deckkraft (%)</div>
  <div class="a t15" style="left:542px;top:7px">100,0</div>
  <div class="a" style="left:576px;top:0;width:1px;height:30px;background:#d8d4cf"></div>
  <div class="a" style="left:593px;top:0;width:1px;height:30px;background:#d8d4cf"></div>
</div>


<!-- dock icons overlay -->
<svg class="a" style="left:0;top:0" width="1273" height="927" viewBox="0 0 1273 927">
 <defs>
  <linearGradient id="b3" x1="0" y1="0" x2="1" y2="1"><stop offset="0" stop-color="#a9c3e0"/><stop offset="1" stop-color="#f4f8fc"/></linearGradient>
  <linearGradient id="y3" x1="0" y1="0" x2="0" y2="1"><stop offset="0" stop-color="#ffe040"/><stop offset="1" stop-color="#e8a000"/></linearGradient>
  <linearGradient id="o3" x1="0" y1="0" x2="0" y2="1"><stop offset="0" stop-color="#ffd000"/><stop offset="1" stop-color="#e05000"/></linearGradient>
 </defs>
 <!-- active tab bg edges -->
 <!-- history icon -->
 <path d="M666 124L671.5 118.5V121.3H677.5C678.6 121.3 679 121.8 679 123V130.7H674.5V126.3H671.5V129.5Z" fill="url(#y3)" stroke="#000" stroke-width="1.1" stroke-linejoin="miter"/>
 <circle cx="677.6" cy="118.8" r="4.2" fill="#dfeaf7" stroke="#000" stroke-width="1.1"/>
 <path d="M677.6 116V119.3H675.5" fill="none" stroke="#000" stroke-width="0.9"/>
 <!-- fill&stroke tab icon -->
 <g transform="translate(723 115) scale(0.667)"><path d="M1.5 23.5V1.5H21" fill="none" stroke="#000" stroke-width="3"/>
 <path d="M0.3 23.7L2.5 19.5L5.5 16.5L18.5 5L22.8 9.2L11.5 21L7.5 23.7Z" fill="#000"/>
 <path d="M6.5 18L18.8 7.2" stroke="#bbb" stroke-width="0.9"/>
 <path d="M18.5 5L23.7 0.3L23.8 10.2L22.8 9.2Z" fill="url(#o3)" stroke="#000" stroke-width="0.8"/></g>
 <path d="M745.5 119.5L752.5 126.5M752.5 119.5L745.5 126.5" stroke="#555" stroke-width="1.8"/>
 <!-- T -->
 <path d="M798 114.8H814V119.3H812.8C812.2 117.5 811.5 117.2 809.5 117.2H808.8V128.7H810.5V131H801.5V128.7H803.2V117.2H802.5C800.5 117.2 799.8 117.5 799.2 119.3H798Z" fill="#000"/>
 <!-- align -->
 <rect x="861.5" y="115" width="1.3" height="16" fill="#e00000"/>
 <rect x="864.5" y="115.5" width="6" height="4" fill="#a9c3e0" stroke="#111" stroke-width="1"/>
 <rect x="864.5" y="121.2" width="13" height="4" fill="#a9c3e0" stroke="#111" stroke-width="1"/>
 <rect x="864.5" y="126.8" width="10" height="4" fill="#a9c3e0" stroke="#111" stroke-width="1"/>
 <!-- layers -->
 <path d="M925.8 119.6L929 116.4H941.6L938.4 119.6Z M927 124.6L930.2 121.4H942.8L939.6 124.6Z M928.2 129.8L931.4 126.6H944L940.8 129.8Z" fill="#000"/>
 <!-- export doc -->
 <path d="M990.5 115.8H997.5L1001 119.5V130H990.5Z" fill="#fff" stroke="#000" stroke-width="1.2"/>
 <path d="M997 116V120H1001" fill="none" stroke="#000" stroke-width="1"/>
 <path d="M995 123H1003" stroke="#000" stroke-width="1.2"/>
 <path d="M1002.5 120L1006 123L1002.5 126Z" fill="#000"/>
 <!-- transform -->
 <rect x="1053.8" y="115.5" width="7.5" height="7.5" fill="#8fb4e0" stroke="#000" stroke-width="1"/>
 <path d="M1064.5 119.5C1068 120.5 1070 123 1069.5 126C1069 129 1065.5 130.5 1062.5 129.5C1060.5 128.7 1059.5 127.5 1059 126" fill="none" stroke="#d00" stroke-width="1.3" stroke-dasharray="1.3 1.3"/>
 <path d="M1062 119.5L1065.5 117V122Z" fill="#d00"/>
 <!-- clone circles -->
 <path d="M1118 122.5V130.3H1126.5" fill="none" stroke="#000" stroke-width="1.3"/>
 <path d="M1120.3 120.5V128H1128" fill="none" stroke="#000" stroke-width="1.3"/>
 <circle cx="1128.3" cy="121.3" r="5.3" fill="#fff" stroke="#000" stroke-width="1.5"/>
 <circle cx="1128.3" cy="121.3" r="3" fill="none" stroke="#000" stroke-width="1"/>
 <!-- path effects -->
 <path d="M1184 128.5C1186 123 1191 119 1197 117" fill="none" stroke="#111" stroke-width="1.2"/>
 <path d="M1184.5 125.5L1187.5 124L1186.5 121M1187.5 123L1190.5 121.5L1189.8 118.5M1190.5 120.8L1193.5 119.5L1193 117" fill="none" stroke="#1a7a1a" stroke-width="1.3"/>
 <path d="M1185 129L1188 126.5" stroke="#1a7a1a" stroke-width="1.2"/>
 <rect x="1182.5" y="128" width="3.2" height="3.2" fill="#fff" stroke="#00f" stroke-width="1.1"/>
 <rect x="1195.5" y="115.2" width="3.2" height="3.2" fill="#fff" stroke="#00f" stroke-width="1.1"/>
 <!-- chevron -->
 <path d="M1237.5 119.5L1244 126L1250.5 119.5" fill="none" stroke="#333" stroke-width="1.6"/>

 <!-- Muster der Kontur icon -->
 <path d="M929 157.8H941M929 168.6H944" stroke="#000" stroke-width="1.6"/>
 <path d="M929 163.2H931.5M933 163.2H935.5M937 163.2H939.5M941 163.2H943.5" stroke="#000" stroke-width="1.6"/>
 <path d="M940.5 154.8L945 157.8L940.5 160.8Z" fill="#000"/>
 <!-- fill type x and ? -->
 <path d="M657.5 199.5L664.5 206.5M664.5 199.5L657.5 206.5" stroke="#000" stroke-width="2"/>
 <text x="908" y="210" font-family="Liberation Sans" font-weight="bold" font-size="19" fill="#000">?</text>
 <!-- hearts -->
 <path transform="translate(1192 195.2)" d="M8 2.3C6.5 0 0.3 -0.3 0.3 4.8C0.3 10 4 15.8 8 15.8C12 15.8 15.7 10 15.7 4.8C15.7 -0.3 9.5 0 8 2.3Z M8 4.5C6.5 6.5 5 9 5 10.5C5 12.3 6.3 13.3 8 13.3C9.7 13.3 11 12.3 11 10.5C11 9 9.5 6.5 8 4.5Z" fill="#000" fill-rule="evenodd"/>
 <path transform="translate(1228 195)" d="M8 2.3C6.5 0 0.3 -0.3 0.3 4.8C0.3 10 4 15.8 8 15.8C12 15.8 15.7 10 15.7 4.8C15.7 -0.3 9.5 0 8 2.3Z" fill="#000"/>
 <!-- Farbverlauf dropdown contents -->
 <path d="M742 239.8H756M742 244.7H756M742 249.6H756" stroke="#000" stroke-width="2.4"/>
 <path d="M766.5 241.5H778.5L772.5 248Z" fill="#000"/>
 <!-- double arrow -->
 <path d="M1050.5 245H1060" stroke="#000" stroke-width="2"/>
 <path d="M1047 245L1052 240.5M1047 245L1052 249.5M1063.5 245L1058.5 240.5M1063.5 245L1058.5 249.5" stroke="#000" stroke-width="2" stroke-linecap="round"/>
 <!-- repeat icon -->
 <path d="M1206.5 241V249M1217.5 241V249M1206.5 245H1217.5" stroke="#000" stroke-width="1.8"/>
 <path d="M1229.5 241.5H1242L1235.8 248Z" fill="#000"/>
 <!-- gradient stops -->
 <path d="M649.8 282L657 275L664.2 282V294C664.2 295.5 663.5 296.2 662 296.2H652C650.5 296.2 649.8 295.5 649.8 294Z" fill="#d40000" stroke="#c9c6c2" stroke-width="1.2"/>
 <path d="M1234.5 281L1241 275L1247.5 281V295C1247.5 296 1247 296.5 1246 296.5H1236C1235 296.5 1234.5 296 1234.5 295Z" fill="#fff" stroke="#c9c6c2" stroke-width="1"/>
 <path d="M1235 281L1241 275.5L1247 281V287H1235Z" fill="#e00000"/>
 <rect x="1235" y="287" width="6" height="5" fill="#e8e8e8"/><rect x="1241" y="291" width="6" height="5" fill="#c0c0c0"/>
 <circle cx="1241" cy="288" r="2.2" fill="#fff" stroke="#400" stroke-width="1.2"/>
 <path d="M1235.5 265L1241 270L1246.5 265" fill="none" stroke="#222" stroke-width="1.3"/>

 <!-- Zwischenfarben triangle -->
 <path d="M646.5 313.5H657.5L652 319.5Z" fill="#000"/>
 <!-- stop list circles -->
 <circle cx="684" cy="354.6" r="14" fill="#d40000" stroke="#fff" stroke-width="0.8"/>
 <clipPath id="hc"><circle cx="684" cy="386.8" r="14"/></clipPath>
 <g clip-path="url(#hc)">
  <rect x="670" y="372.8" width="14" height="28" fill="#e00000"/>
  <rect x="684" y="372.8" width="14" height="28" fill="#b4b4b4"/>
  <path d="M684 375h4.6v4.6h-4.6zM688.6 379.6h4.6v4.6h-4.6zM684 384.2h4.6v4.6h-4.6zM688.6 388.8h4.6v4.6h-4.6zM684 393.4h4.6v4.6h-4.6zM693.2 375h4.6v4.6h-4.6zM693.2 384.2h4.6v4.6h-4.6zM693.2 393.4h4.6v4.6h-4.6z" fill="#dcdcdc"/>
 </g>
 <circle cx="684" cy="386.8" r="14" fill="none" stroke="#102a60" stroke-width="0.9"/>
 <!-- Farbrad triangle + icon -->
 <path d="M728 383.5H740L734 389.5Z" fill="#000"/>
 <circle cx="754" cy="386.8" r="6" fill="none" stroke="url(#cw)" stroke-width="4"/>
 <defs><linearGradient id="cw" x1="0" y1="0" x2="1" y2="1"><stop offset="0" stop-color="#e00"/><stop offset="0.3" stop-color="#fc0"/><stop offset="0.55" stop-color="#0c0"/><stop offset="0.8" stop-color="#00f"/><stop offset="1" stop-color="#c0f"/></linearGradient></defs>

 <!-- slider markers -->
 <path d="M1042 658.5H1050L1046 662.5Z M1042 690.5H1050L1046 686.5Z" fill="#fff" stroke="#1a3a3a" stroke-width="1"/>
 <path d="M955 696.5H963L959 700.5Z M955 728.5H963L959 724.5Z" fill="#fff" stroke="#1a3a3a" stroke-width="1"/>
 <path d="M744.5 620.5V625L748 620.5Z M744.5 653.5V649L748 653.5Z M744.5 734.5V739L748 734.5Z M744.5 767V762.5L748 767Z" fill="#fff" stroke="#1a3a3a" stroke-width="0.8"/>

 <!-- bottom icons -->
 <path d="M659 789.8H673M666 782.8V796.8" stroke="#111" stroke-width="1.8"/>
 <path d="M695 789.8H709.5" stroke="#111" stroke-width="1.8"/>
 <path d="M725.5 782.5L739 789.8L725.5 797Z" fill="#cde8d8" opacity="0.9"/>
 <path d="M725.5 782.5L739 789.8L732 793Z" fill="#e0c8f0" opacity="0.8"/>
 <circle cx="752" cy="789.3" r="5.6" fill="none" stroke="#f6c0c0" stroke-width="4.4"/>
 <path d="M777.5 796.5L778 794L785 787L787 789L780 796Z" fill="#5aa0e0" stroke="#000" stroke-width="1"/>
 <path d="M784 786.5L789.5 781C790.5 780 791.5 780 792.2 780.8C793 781.5 793 782.5 792 783.5L786.5 789Z" fill="#000"/>
 <path d="M776.8 797.5L778.2 796" stroke="#000" stroke-width="1.4"/>
 <!-- toolbar2 mm arrow -->
 <path d="M537 74.5H549L543 81Z" fill="#000"/>
 <!-- Mischmodus arrow -->
 <path d="M1234 830H1246L1240 836Z" fill="#000"/>

 <!-- toolbar2 icons -->
 <path d="M583 66.2H607V77.5H602.3V70.8H583Z" fill="#000"/>
 <path d="M583 74.2H598V80H596V76.2H583Z" fill="#000"/>
 <path d="M587 85.3H589M591 85.3H593M595 85.3H601" stroke="#000" stroke-width="1.6"/>
 <path d="M600.5 81.3L606.5 85.3L600.5 89.3Z" fill="#000"/>
 <!-- btn1 -->
 <path d="M620 68.5H634C639 68.5 643 72.5 643 78.5" fill="none" stroke="#000" stroke-width="2.2"/>
 <path d="M620 74H631C634.5 74 637.5 77 637.5 80.5" fill="none" stroke="#000" stroke-width="2.2"/>
 <path d="M624 85.3H626M628 85.3H630M632 85.3H638" stroke="#000" stroke-width="1.6"/>
 <path d="M637.5 81.3L643.5 85.3L637.5 89.3Z" fill="#000"/>
 <!-- btn2 -->
 <rect x="657" y="66.5" width="23.5" height="10.5" fill="#9ec0e6"/>
 <path d="M657 67.8H680V76.5" fill="none" stroke="#000" stroke-width="2.4"/>
 <rect x="657" y="73" width="14" height="7.5" fill="#b8d2ee"/>
 <path d="M657 73.8H672V80" fill="none" stroke="#000" stroke-width="2.2"/>
 <path d="M661 85.3H663M665 85.3H667M669 85.3H675" stroke="#000" stroke-width="1.6"/>
 <path d="M674.5 81.3L680.5 85.3L674.5 89.3Z" fill="#000"/>
 <!-- btn3 -->
 <clipPath id="pc"><rect x="694" y="66" width="24" height="12"/></clipPath>
 <g clip-path="url(#pc)"><rect x="694" y="66" width="24" height="12" fill="#000"/>
 <path d="M694 66.8L698.5 71.3L694 75.8Z M703 66.8L707.5 71.3L703 75.8L698.5 71.3Z M712 66.8L716.5 71.3L712 75.8L707.5 71.3Z M694 75.8L696.2 78H691.8Z M703 75.8L705.2 78H700.8Z M712 75.8L714.2 78H709.8Z" fill="#fff"/></g>
 <path d="M698 85.3H700M702 85.3H704M706 85.3H712" stroke="#000" stroke-width="1.6"/>
 <path d="M711.5 81.3L717.5 85.3L711.5 89.3Z" fill="#000"/>

 <!-- top right btn icons -->
 <path d="M1192.5 30.5L1201 39" stroke="#000" stroke-width="2.2"/>
 <path d="M1197.5 40.5L1203.5 34.5V40.5Z" fill="#000"/>
 <path d="M1190.4 24.5L1194.4 28.4L1190.4 32.3L1186.5 28.4Z" fill="#b0b0f0" stroke="#00f" stroke-width="1.4"/>
 <path d="M1205.4 39.4L1209.3 43.3L1205.4 47.2L1201.5 43.3Z" fill="#b0b0f0" stroke="#070" stroke-width="1.4"/>
 <path d="M1234.8 35.9L1244 27.4V44.7Z" fill="#000"/>

 <!-- Unscharfe/Deckkraft +- -->
 <path d="M1222 869H1236" stroke="#c9c6c2" stroke-width="1.8"/>
 <path d="M1239 869H1252.5M1245.8 862V876" stroke="#111" stroke-width="1.8"/>
 <path d="M1222 905H1236" stroke="#111" stroke-width="1.8"/>
 <path d="M1239 905H1252.5M1245.8 898V912" stroke="#c9c6c2" stroke-width="1.8"/>
</svg>

</body></html>
